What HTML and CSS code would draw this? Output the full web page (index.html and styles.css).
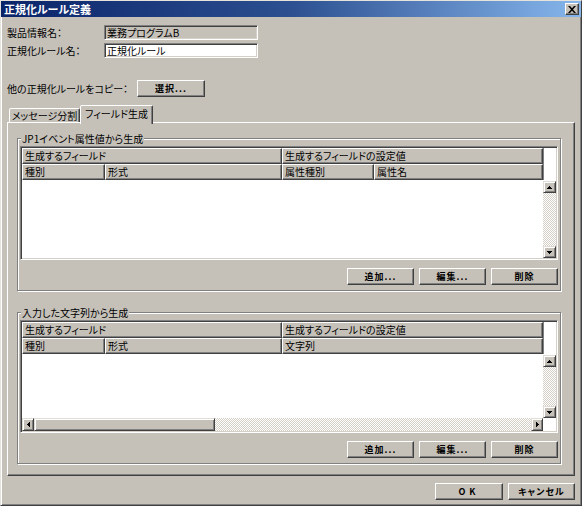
FILE: index.html
```html
<!DOCTYPE html>
<html lang="ja">
<head>
<meta charset="utf-8">
<title>正規化ルール定義</title>
<link rel="stylesheet" href="styles.css">
</head>
<body>
<div class="window">
  <div class="titlebar">
    <span class="title">正規化ルール定義</span>
    <span class="close"><svg width="8" height="7" viewBox="0 0 8 7"><path d="M0 0h2l2 2.3L6 0h2L5 3.5 8 7H6L4 4.7 2 7H0l3-3.5z" fill="#000"/></svg></span>
  </div>
  <div class="content">
    <div class="form-row">
      <span class="label">製品情報名：</span>
      <div class="field readonly">業務プログラムB</div>
    </div>
    <div class="form-row">
      <span class="label">正規化ルール名：</span>
      <div class="field">正規化ルール</div>
    </div>
    <div class="copy-row">
      <span class="copy-label">他の正規化ルールをコピー：</span>
      <div class="btn btn-select">選択...</div>
    </div>
    <div class="tabs">
      <div class="tab">メッセージ分割</div>
      <div class="tab active">フィールド生成</div>
    </div>
    <div class="panel">
      <div class="group group-1">
        <span class="legend">JP1イベント属性値から生成</span>
        <div class="list list-1">
          <div class="hrow">
            <div class="hcell w-field">生成するフィールド</div>
            <div class="hcell w-value">生成するフィールドの設定値</div>
            <div class="hfill"></div>
          </div>
          <div class="hrow">
            <div class="hcell w-kind">種別</div>
            <div class="hcell w-form">形式</div>
            <div class="hcell w-attr">属性種別</div>
            <div class="hcell w-name">属性名</div>
            <div class="hfill"></div>
          </div>
          <div class="lbody">
            <div class="area"></div>
            <div class="vscroll">
              <div class="sbtn"><svg width="5" height="3" viewBox="0 0 5 3"><path d="M2 0h1v1h1v1h1v1H0V2h1V1h1z" fill="#000"/></svg></div>
              <div class="track"></div>
              <div class="sbtn"><svg width="5" height="3" viewBox="0 0 5 3"><path d="M0 0h5v1H4v1H3v1H2V2H1V1H0z" fill="#000"/></svg></div>
            </div>
          </div>
        </div>
        <div class="btn-row">
          <div class="btn">追加...</div>
          <div class="btn">編集...</div>
          <div class="btn">削除</div>
        </div>
      </div>
      <div class="group group-2">
        <span class="legend">入力した文字列から生成</span>
        <div class="list list-2">
          <div class="hrow">
            <div class="hcell w-field">生成するフィールド</div>
            <div class="hcell w-value">生成するフィールドの設定値</div>
            <div class="hfill"></div>
          </div>
          <div class="hrow">
            <div class="hcell w-kind">種別</div>
            <div class="hcell w-form">形式</div>
            <div class="hcell w-value">文字列</div>
            <div class="hfill"></div>
          </div>
          <div class="lbody">
            <div class="area"></div>
            <div class="vscroll">
              <div class="sbtn"><svg width="5" height="3" viewBox="0 0 5 3"><path d="M2 0h1v1h1v1h1v1H0V2h1V1h1z" fill="#000"/></svg></div>
              <div class="track"></div>
              <div class="sbtn"><svg width="5" height="3" viewBox="0 0 5 3"><path d="M0 0h5v1H4v1H3v1H2V2H1V1H0z" fill="#000"/></svg></div>
            </div>
          </div>
          <div class="hscroll">
            <div class="sbtn"><svg width="3" height="5" viewBox="0 0 3 5"><path d="M2 0h1v5H2V4H1V3H0V2h1V1h1z" fill="#000"/></svg></div>
            <div class="thumb"></div>
            <div class="track"></div>
            <div class="sbtn"><svg width="3" height="5" viewBox="0 0 3 5"><path d="M0 0h1v1h1v1h1v1H2v1H1v1H0z" fill="#000"/></svg></div>
            <div class="corner"></div>
          </div>
        </div>
        <div class="btn-row">
          <div class="btn">追加...</div>
          <div class="btn">編集...</div>
          <div class="btn">削除</div>
        </div>
      </div>
    </div>
    <div class="footer">
      <div class="btn btn-ok">OK</div>
      <div class="btn btn-cancel">キャンセル</div>
    </div>
  </div>
</div>
</body>
</html>
```

FILE: styles.css
```css
* { box-sizing: border-box; }
html, body { margin: 0; padding: 0; }
body {
  width: 582px;
  height: 506px;
  overflow: hidden;
  background: #c5c1b9;
  font-family: "Noto Sans CJK JP", "Noto Sans", sans-serif;
  font-size: 10px;
  color: #000;
  font-feature-settings: "palt";
}
.window {
  width: 582px;
  height: 506px;
  background: #c5c1b9;
  border: 1px solid;
  border-color: #e6e3dd #404040 #404040 #e6e3dd;
  box-shadow: inset 1px 1px #fff, inset -1px -1px #808080;
  display: flex;
  flex-direction: column;
}
.titlebar {
  height: 16px;
  flex: none;
  display: flex;
  align-items: center;
  justify-content: space-between;
  padding: 0 2px 0 3px;
  background: linear-gradient(to right, #0a246a 0%, #2c5090 50%, #86b6ec 100%);
}
.title {
  color: #fff;
  font-weight: bold;
  font-size: 11px;
  line-height: 14px;
}
.close {
  width: 14px;
  height: 12px;
  background: #c5c1b9;
  border: 1px solid;
  border-color: #fff #404040 #404040 #fff;
  box-shadow: inset -1px -1px #808080;
  display: flex;
  align-items: center;
  justify-content: center;
}
.content {
  flex: 1;
  padding: 8px 6px 0 6px;
  display: flex;
  flex-direction: column;
}
.form-row {
  display: flex;
  align-items: center;
  height: 15px;
}
.form-row + .form-row { margin-top: 3px; }
.label { width: 97px; line-height: 15px; }
.field {
  width: 154px;
  height: 15px;
  border: 1px solid;
  border-color: #808080 #fff #fff #808080;
  box-shadow: inset 1px 1px #404040, inset -1px -1px #d4d0c8;
  padding: 0 2px;
  line-height: 13px;
  background: #fff;
  white-space: nowrap;
}
.field.readonly { background: #c5c1b9; }
.copy-row {
  margin-top: 22px;
  height: 17px;
  display: flex;
  align-items: center;
}
.copy-label { width: 130px; }
.btn {
  width: 67px;
  height: 17px;
  flex: none;
  background: #c5c1b9;
  border: 1px solid;
  border-color: #fff #404040 #404040 #fff;
  box-shadow: inset -1px -1px #808080;
  display: flex;
  align-items: center;
  justify-content: center;
  font-size: 9px;
  font-weight: bold;
  letter-spacing: 1px;
  line-height: 1;
}
.btn-select { width: 68px; }
.btn-ok { width: 68px; letter-spacing: 4px; }
.tabs {
  margin-top: 8px;
  height: 17px;
  display: flex;
  align-items: flex-end;
  padding-left: 2px;
}
.tab {
  width: 71px;
  height: 14px;
  border: 1px solid;
  border-bottom: none;
  border-color: #fff #404040 transparent #fff;
  box-shadow: inset -1px 0 #808080;
  border-radius: 2px 2px 0 0;
  display: flex;
  align-items: center;
  justify-content: center;
  background: #c5c1b9;
  white-space: nowrap;
}
.tab.active {
  width: 73px;
  height: 19px;
  margin-bottom: -2px;
  padding-bottom: 3px;
  position: relative;
  z-index: 1;
}
.panel {
  height: 354px;
  flex: none;
  border: 1px solid;
  border-color: #fff #404040 #404040 #fff;
  box-shadow: inset -1px -1px #808080;
  padding: 15px 0 0 9px;
}
.group {
  position: relative;
  width: 544px;
  border: 1px solid #808080;
  box-shadow: inset 1px 1px #fff, 1px 1px #fff;
  padding: 7px 2px 5px 2px;
  display: flex;
  flex-direction: column;
}
.group-1 { height: 153px; }
.group-2 { height: 152px; margin-top: 21px; }
.legend {
  position: absolute;
  top: -6px;
  left: 3px;
  padding: 0 1px;
  background: #c5c1b9;
  line-height: 11px;
  white-space: nowrap;
}
.list {
  flex: none;
  border: 1px solid;
  border-color: #808080 #fff #fff #808080;
  box-shadow: inset 1px 1px #404040, inset -1px -1px #d4d0c8;
  padding: 1px;
  display: flex;
  flex-direction: column;
  background: #fff;
}
.list-1 { height: 114px; }
.list-2 { height: 113px; }
.hrow {
  display: flex;
  height: 16px;
  flex: none;
}
.hcell {
  flex: none;
  height: 16px;
  border: 1px solid;
  border-color: #fff #404040 #404040 #fff;
  box-shadow: inset -1px -1px #808080;
  background: #c5c1b9;
  padding: 0 2px;
  line-height: 14px;
  white-space: nowrap;
  overflow: hidden;
}
.w-kind { width: 83px; }
.w-form { width: 177px; }
.w-attr { width: 92px; }
.w-name { width: 169px; }
.w-field { width: 260px; }
.w-value { width: 261px; }
.hfill {
  flex: 1;
  background: #fff;
  border-left: 1px solid #808080;
}
.lbody {
  flex: 1;
  display: flex;
  min-height: 0;
}
.area { flex: 1; background: #fff; }
.vscroll {
  width: 13px;
  flex: none;
  display: flex;
  flex-direction: column;
  padding-top: 1px;
}
.track {
  flex: 1;
  background: repeating-conic-gradient(#ffffff 0 25%, #d4d0c8 0 50%) 0 0 / 2px 2px;
}
.sbtn {
  width: 13px;
  height: 12px;
  flex: none;
  background: #c5c1b9;
  border: 1px solid;
  border-color: #e0ddd6 #404040 #404040 #e0ddd6;
  box-shadow: inset 1px 1px #fff, inset -1px -1px #808080;
  display: flex;
  align-items: center;
  justify-content: center;
}
.sbtn svg { display: block; }
.hscroll {
  height: 13px;
  flex: none;
  display: flex;
}
.hscroll .sbtn { width: 12px; height: 13px; }
.thumb {
  width: 181px;
  flex: none;
  background: #c5c1b9;
  border: 1px solid;
  border-color: #e0ddd6 #404040 #404040 #e0ddd6;
  box-shadow: inset 1px 1px #fff, inset -1px -1px #808080;
}
.corner { width: 13px; flex: none; background: #fff; }
.btn-row {
  display: flex;
  justify-content: flex-end;
  gap: 5px;
  margin-top: 8px;
}
.footer {
  display: flex;
  justify-content: flex-end;
  gap: 5px;
  margin-top: 7px;
}
```
